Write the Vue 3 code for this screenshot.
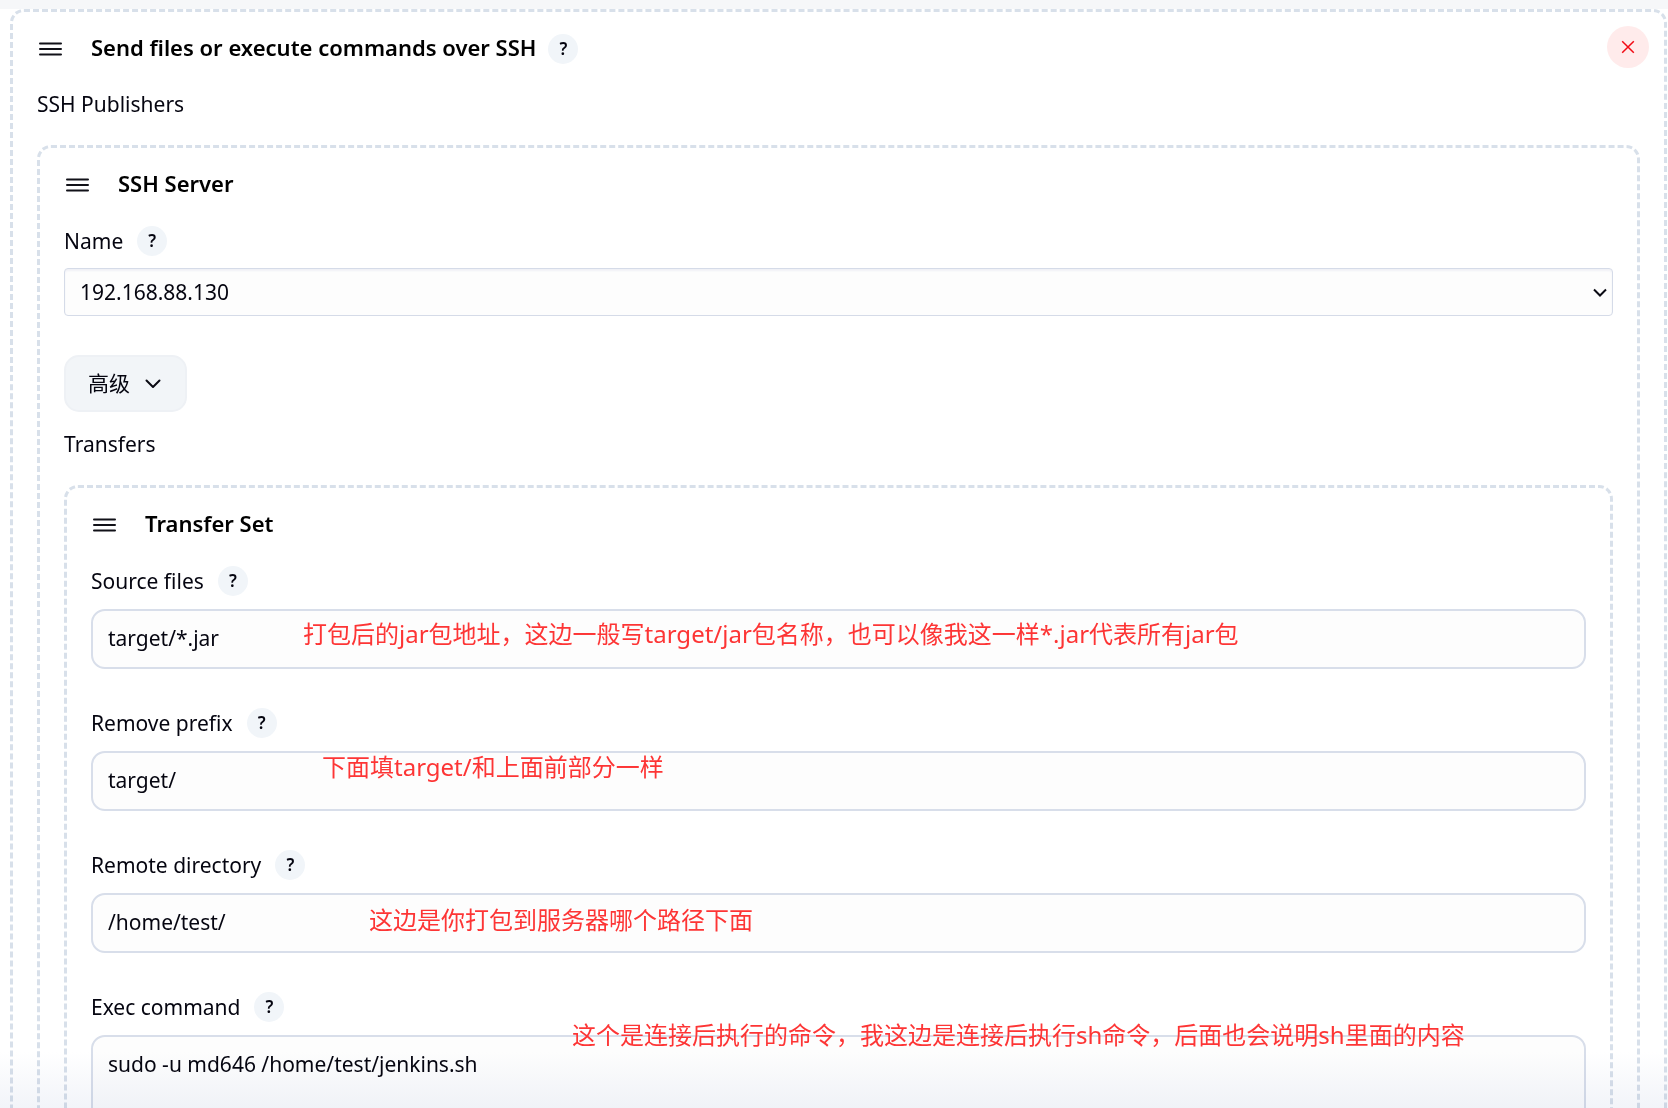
<script setup>
import { ref } from 'vue'

const server = ref('192.168.88.130')
const servers = ['192.168.88.130']

const fields = ref([
  {
    id: 'source-files',
    label: 'Source files',
    value: 'target/*.jar',
    note: '打包后的jar包地址，这边一般写target/jar包名称，也可以像我这一样*.jar代表所有jar包',
    place: 'note-source'
  },
  {
    id: 'remove-prefix',
    label: 'Remove prefix',
    value: 'target/',
    note: '下面填target/和上面前部分一样',
    place: 'note-prefix'
  },
  {
    id: 'remote-directory',
    label: 'Remote directory',
    value: '/home/test/',
    note: '这边是你打包到服务器哪个路径下面',
    place: 'note-directory'
  }
])

const command = ref('sudo -u md646 /home/test/jenkins.sh')
</script>

<template>
  <main class="page">
    <div class="strip"></div>

    <section class="chunk outer">
      <header class="chunk-header">
        <svg class="handle" viewBox="0 0 28 28" aria-hidden="true">
          <path d="M3 8.5H24M3 14H24M3 19.5H24" />
        </svg>
        <h2 class="title">Send files or execute commands over SSH</h2>
        <button type="button" class="help" aria-label="Help">?</button>
      </header>
      <button type="button" class="remove" aria-label="Remove">
        <svg viewBox="0 0 14 14" aria-hidden="true"><path d="M1.2 1.2L12.8 12.8M12.8 1.2L1.2 12.8" /></svg>
      </button>

      <div class="caption">SSH Publishers</div>

      <section class="chunk">
        <header class="chunk-header">
          <svg class="handle" viewBox="0 0 28 28" aria-hidden="true">
            <path d="M3 8.5H24M3 14H24M3 19.5H24" />
          </svg>
          <h3 class="title">SSH Server</h3>
        </header>

        <div class="label-row">
          <label for="server-name">Name</label>
          <button type="button" class="help" aria-label="Help">?</button>
        </div>
        <div class="select-wrap">
          <select id="server-name" v-model="server">
            <option v-for="s in servers" :key="s" :value="s">{{ s }}</option>
          </select>
          <svg class="arrow" viewBox="0 0 16 10" aria-hidden="true"><path d="M2 1.5L8 7.5L14 1.5" /></svg>
        </div>

        <button type="button" class="advanced">
          <span>高级</span>
          <svg viewBox="0 0 16 10" aria-hidden="true"><path d="M1.5 1.5L8 8L14.5 1.5" /></svg>
        </button>

        <div class="caption transfers">Transfers</div>

        <section class="chunk">
          <header class="chunk-header">
            <svg class="handle" viewBox="0 0 28 28" aria-hidden="true">
              <path d="M3 8.5H24M3 14H24M3 19.5H24" />
            </svg>
            <h4 class="title">Transfer Set</h4>
          </header>

          <div v-for="f in fields" :key="f.id" class="field">
            <div class="label-row">
              <label :for="f.id">{{ f.label }}</label>
              <button type="button" class="help" aria-label="Help">?</button>
            </div>
            <div class="control">
              <input :id="f.id" v-model="f.value" type="text" />
              <span class="note" :class="f.place">{{ f.note }}</span>
            </div>
          </div>

          <div class="field">
            <div class="label-row">
              <label for="exec-command">Exec command</label>
              <button type="button" class="help" aria-label="Help">?</button>
            </div>
            <div class="control">
              <textarea id="exec-command" v-model="command" rows="5"></textarea>
              <span class="note note-command">这个是连接后执行的命令，我这边是连接后执行sh命令，后面也会说明sh里面的内容</span>
            </div>
          </div>
        </section>
      </section>
    </section>

    <div class="fade"></div>
  </main>
</template>

<style>
body {
  background: #fff;
}
</style>

<style scoped>
* {
  box-sizing: border-box;
}

.page {
  position: relative;
  height: 100vh;
  overflow: hidden;
  background: #fff;
  color: #050510;
  font-family: "Noto Sans", "Noto Sans CJK SC", sans-serif;
  font-size: 21px;
  line-height: 30px;
}

button,
input,
select,
textarea {
  margin: 0;
  color: inherit;
  font: inherit;
}

.strip {
  height: 9px;
  background: #f6f7f9;
}

.chunk {
  position: relative;
  padding: 22px 24px 24px;
  border: 3px dashed #d8e0ea;
  border-radius: 14px;
}

.outer {
  margin: 0 1px 0 10px;
}

.chunk-header {
  display: flex;
  align-items: center;
  height: 30px;
  margin-bottom: 26px;
}

.handle {
  width: 28px;
  height: 28px;
  margin-right: 26px;
  fill: none;
  stroke: #111118;
  stroke-width: 2;
  stroke-linecap: round;
}

.title {
  margin: 0;
  padding-bottom: 4px;
  color: #000;
  font-size: 22px;
  font-weight: 600;
}

.help {
  width: 30px;
  height: 30px;
  margin-left: 12px;
  padding: 0;
  border: 0;
  border-radius: 50%;
  background: #f1f5f9;
  font-size: 17px;
  font-weight: 600;
  line-height: 30px;
  text-align: center;
}

.label-row .help {
  margin-left: 14px;
}

.remove {
  position: absolute;
  top: 14px;
  right: 15px;
  display: flex;
  align-items: center;
  justify-content: center;
  width: 42px;
  height: 42px;
  padding: 0;
  border: 0;
  border-radius: 50%;
  background: #ffebeb;
}

.remove svg {
  width: 14px;
  height: 14px;
  fill: none;
  stroke: #f20a14;
  stroke-width: 1.5;
}

.caption {
  margin-bottom: 27px;
  line-height: 28px;
}

.transfers {
  margin-top: 18px;
}

.label-row {
  display: flex;
  align-items: center;
  margin-bottom: 13px;
}

.select-wrap {
  position: relative;
  margin: -1px 0 39px;
}

select {
  display: block;
  width: 100%;
  height: 48px;
  padding: 0 40px 0 15px;
  border: 1px solid #d5dbe8;
  border-radius: 4px;
  background: #fdfdfd;
  box-shadow: inset 0 2px 2px #f0f1f6;
  appearance: none;
}

.arrow {
  position: absolute;
  top: 20px;
  right: 5px;
  width: 16px;
  height: 10px;
  fill: none;
  stroke: #0b0b14;
  stroke-width: 2;
  pointer-events: none;
}

.advanced {
  display: flex;
  align-items: center;
  gap: 15px;
  height: 57px;
  padding: 0 24px 0 22px;
  border: 2px solid #eef1f5;
  border-radius: 15px;
  background: #f2f5f8;
  font-family: "Noto Sans CJK SC", sans-serif;
}

.advanced span {
  padding-bottom: 4px;
}

.advanced svg {
  width: 16px;
  height: 10px;
  fill: none;
  stroke: #0b0b14;
  stroke-width: 2;
  stroke-linecap: round;
  stroke-linejoin: round;
}

.field {
  margin-bottom: 39px;
}

.control {
  position: relative;
}

input,
textarea {
  display: block;
  width: 100%;
  padding: 12px 15px 14px;
  border: 2px solid #d8deea;
  border-radius: 14px;
  background: #fdfdfd;
  resize: none;
  outline: none;
}

input {
  height: 60px;
}

.note {
  position: absolute;
  color: #fd3535;
  font-size: 24px;
  line-height: 36px;
  white-space: nowrap;
  pointer-events: none;
}

.note-source {
  top: 7px;
  left: 212px;
}

.note-prefix {
  top: -2px;
  left: 231px;
}

.note-directory {
  top: 9px;
  left: 278px;
}

.note-command {
  top: -18px;
  left: 481px;
}

.fade {
  position: absolute;
  right: 0;
  bottom: 0;
  left: 0;
  height: 56px;
  background: linear-gradient(#fff, #f2f4f9);
  mix-blend-mode: multiply;
  pointer-events: none;
}
</style>
